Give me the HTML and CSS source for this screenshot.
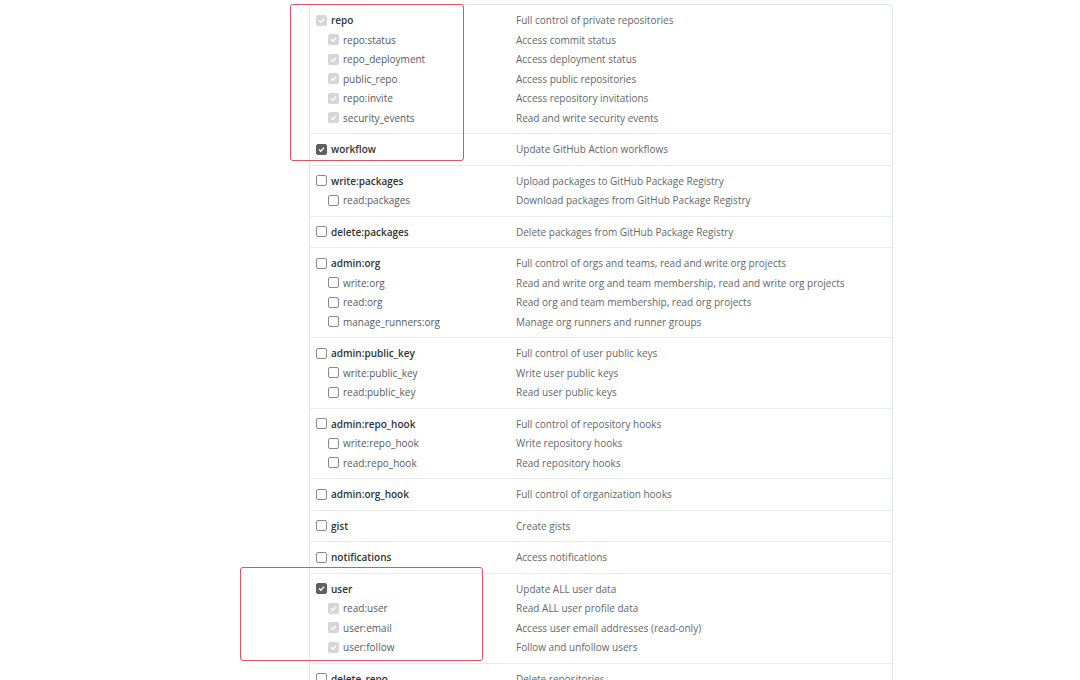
FILE: index.html
```html
<!DOCTYPE html>
<html lang="en">
  <head>
    <meta charset="UTF-8" />
    <title>Scopes</title>
    <link rel="stylesheet" href="styles.css">
  </head>
  <body>
    <div class="scopes">
      <div class="group">
        <div class="row"><label class="scope main"><span class="box on-light"><svg viewBox="0 0 11 11"><path d="M2.5 5.6 4.6 7.6 8.6 3.3"/></svg></span>repo</label><span class="desc">Full control of private repositories</span></div>
        <div class="row"><label class="scope sub"><span class="box on-light"><svg viewBox="0 0 11 11"><path d="M2.5 5.6 4.6 7.6 8.6 3.3"/></svg></span>repo:status</label><span class="desc">Access commit status</span></div>
        <div class="row"><label class="scope sub"><span class="box on-light"><svg viewBox="0 0 11 11"><path d="M2.5 5.6 4.6 7.6 8.6 3.3"/></svg></span>repo_deployment</label><span class="desc">Access deployment status</span></div>
        <div class="row"><label class="scope sub"><span class="box on-light"><svg viewBox="0 0 11 11"><path d="M2.5 5.6 4.6 7.6 8.6 3.3"/></svg></span>public_repo</label><span class="desc">Access public repositories</span></div>
        <div class="row"><label class="scope sub"><span class="box on-light"><svg viewBox="0 0 11 11"><path d="M2.5 5.6 4.6 7.6 8.6 3.3"/></svg></span>repo:invite</label><span class="desc">Access repository invitations</span></div>
        <div class="row"><label class="scope sub"><span class="box on-light"><svg viewBox="0 0 11 11"><path d="M2.5 5.6 4.6 7.6 8.6 3.3"/></svg></span>security_events</label><span class="desc">Read and write security events</span></div>
      </div>
      <div class="group">
        <div class="row"><label class="scope main"><span class="box on"><svg viewBox="0 0 11 11"><path d="M2.5 5.6 4.6 7.6 8.6 3.3"/></svg></span>workflow</label><span class="desc">Update GitHub Action workflows</span></div>
      </div>
      <div class="group">
        <div class="row"><label class="scope main"><span class="box"></span>write:packages</label><span class="desc">Upload packages to GitHub Package Registry</span></div>
        <div class="row"><label class="scope sub"><span class="box"></span>read:packages</label><span class="desc">Download packages from GitHub Package Registry</span></div>
      </div>
      <div class="group">
        <div class="row"><label class="scope main"><span class="box"></span>delete:packages</label><span class="desc">Delete packages from GitHub Package Registry</span></div>
      </div>
      <div class="group">
        <div class="row"><label class="scope main"><span class="box"></span>admin:org</label><span class="desc">Full control of orgs and teams, read and write org projects</span></div>
        <div class="row"><label class="scope sub"><span class="box"></span>write:org</label><span class="desc">Read and write org and team membership, read and write org projects</span></div>
        <div class="row"><label class="scope sub"><span class="box"></span>read:org</label><span class="desc">Read org and team membership, read org projects</span></div>
        <div class="row"><label class="scope sub"><span class="box"></span>manage_runners:org</label><span class="desc">Manage org runners and runner groups</span></div>
      </div>
      <div class="group">
        <div class="row"><label class="scope main"><span class="box"></span>admin:public_key</label><span class="desc">Full control of user public keys</span></div>
        <div class="row"><label class="scope sub"><span class="box"></span>write:public_key</label><span class="desc">Write user public keys</span></div>
        <div class="row"><label class="scope sub"><span class="box"></span>read:public_key</label><span class="desc">Read user public keys</span></div>
      </div>
      <div class="group">
        <div class="row"><label class="scope main"><span class="box"></span>admin:repo_hook</label><span class="desc">Full control of repository hooks</span></div>
        <div class="row"><label class="scope sub"><span class="box"></span>write:repo_hook</label><span class="desc">Write repository hooks</span></div>
        <div class="row"><label class="scope sub"><span class="box"></span>read:repo_hook</label><span class="desc">Read repository hooks</span></div>
      </div>
      <div class="group">
        <div class="row"><label class="scope main"><span class="box"></span>admin:org_hook</label><span class="desc">Full control of organization hooks</span></div>
      </div>
      <div class="group">
        <div class="row"><label class="scope main"><span class="box"></span>gist</label><span class="desc">Create gists</span></div>
      </div>
      <div class="group">
        <div class="row"><label class="scope main"><span class="box"></span>notifications</label><span class="desc">Access notifications</span></div>
      </div>
      <div class="group">
        <div class="row"><label class="scope main"><span class="box on"><svg viewBox="0 0 11 11"><path d="M2.5 5.6 4.6 7.6 8.6 3.3"/></svg></span>user</label><span class="desc">Update ALL user data</span></div>
        <div class="row"><label class="scope sub"><span class="box on-light"><svg viewBox="0 0 11 11"><path d="M2.5 5.6 4.6 7.6 8.6 3.3"/></svg></span>read:user</label><span class="desc">Read ALL user profile data</span></div>
        <div class="row"><label class="scope sub"><span class="box on-light"><svg viewBox="0 0 11 11"><path d="M2.5 5.6 4.6 7.6 8.6 3.3"/></svg></span>user:email</label><span class="desc">Access user email addresses (read-only)</span></div>
        <div class="row"><label class="scope sub"><span class="box on-light"><svg viewBox="0 0 11 11"><path d="M2.5 5.6 4.6 7.6 8.6 3.3"/></svg></span>user:follow</label><span class="desc">Follow and unfollow users</span></div>
      </div>
      <div class="group">
        <div class="row"><label class="scope main"><span class="box"></span>delete_repo</label><span class="desc">Delete repositories</span></div>
      </div>
    </div>

    <div class="mark mark-repo"></div>
    <div class="mark mark-user"></div>
  </body>
</html>
```

FILE: styles.css
```css
body {
  margin: 0;
  background: #fff;
  font-family: "Open Sans", "Noto Sans", sans-serif;
  font-size: 10px;
  color: #24292e;
  overflow: hidden;
}
.scopes {
  width: 582px;
  margin: 4px 0 0 309px;
  border: 1px solid #e1e4e8;
  border-radius: 4px;
}
.group {
  padding: 5.5px 0;
  border-bottom: 1px solid #e8eaed;
}
.row {
  display: grid;
  grid-template-columns: 206px 1fr;
  align-items: center;
  height: 19.5px;
}
.scope {
  display: flex;
  align-items: center;
  padding-left: 6px;
  white-space: nowrap;
}
.scope.main {
  font-weight: 600;
  color: #2f3337;
}
.scope.sub {
  padding-left: 18px;
  color: #555a5f;
}
.desc {
  color: #62676c;
  white-space: nowrap;
}
.box {
  box-sizing: border-box;
  width: 11px;
  height: 11px;
  margin-right: 4px;
  border: 1px solid #8a8a8a;
  border-radius: 2px;
  background: #fff;
  flex: none;
}
.box svg {
  display: block;
  width: 9px;
  height: 9px;
}
.box path {
  fill: none;
  stroke: #fff;
  stroke-width: 1.7;
}
.box.on {
  background: #5f5f5f;
  border-color: #5f5f5f;
}
.box.on-light {
  background: #d6d6d6;
  border-color: #d6d6d6;
}
.mark {
  position: absolute;
  border: 1.5px solid #e0525f;
  border-radius: 3px;
}
.mark-repo {
  left: 290px;
  top: 4px;
  width: 172px;
  height: 155px;
}
.mark-user {
  left: 240px;
  top: 567px;
  width: 241px;
  height: 92px;
}
```
